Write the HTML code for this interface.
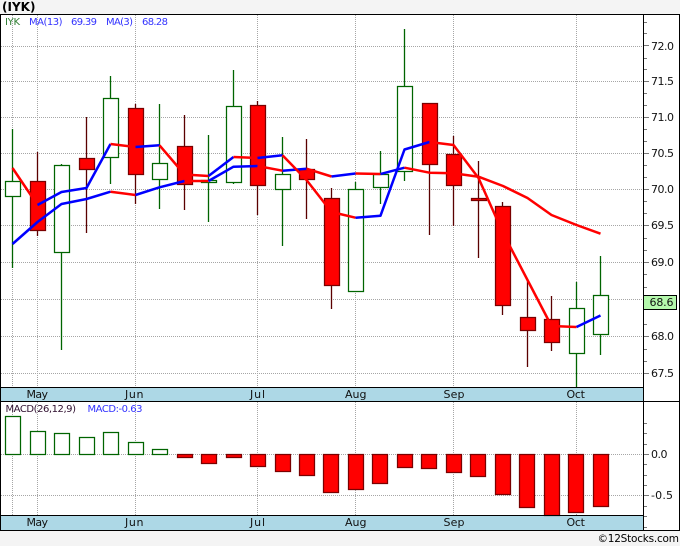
<!DOCTYPE html>
<html><head><meta charset="utf-8"><style>
html,body{margin:0;padding:0;background:#f4f4f4;width:680px;height:546px;overflow:hidden}
svg{display:block}
text{font-family:"DejaVu Sans","Liberation Sans",sans-serif;font-size:11px;fill:#111}
.l{font-size:10px;fill:#3333ff}
</style></head><body>
<svg width="680" height="546" viewBox="0 0 680 546" xmlns="http://www.w3.org/2000/svg">
<rect x="0" y="0" width="680" height="546" fill="#f4f4f4"/>
<rect x="0" y="14" width="680" height="516" fill="#fff"/>
<rect x="1" y="388" width="642" height="13" fill="#add8e6"/>
<rect x="1" y="516" width="642" height="14" fill="#add8e6"/>
<g shape-rendering="crispEdges" stroke="#a6a6a6" stroke-dasharray="1 1" fill="none">
<path d="M1 46.5H644M1 81.5H644M1 117.5H644M1 153.5H644M1 189.5H644M1 225.5H644M1 262.5H644M1 299.5H644M1 336.5H644M1 373.5H644M1 454.5H644M1 495.5H644"/>
<path d="M12.5 15V387M37.5 15V387M135.5 15V387M257.5 15V387M355.5 15V387M453.5 15V387M576.5 15V387M12.5 402V515M37.5 402V515M135.5 402V515M257.5 402V515M355.5 402V515M453.5 402V515M576.5 402V515"/>
</g>
<g fill="none" stroke="#006400" stroke-width="1.3">
<path d="M12.5 129V268M61.5 164V350M110.5 76V184M159.5 104V209M208.5 135V222M233.5 70V184M282.5 137V246M355.5 182V292M380.5 151V204M404.5 29V181M576.5 282V387M600.5 256V355"/>
</g>
<g fill="none" stroke="#5a0000" stroke-width="1.3">
<path d="M37.5 152V236M86.5 117V233M135.5 104V204M184.5 115V210M257.5 101V215M306.5 139V219M331.5 188V309M429.5 103V235M453.5 136V226M478.5 161V258M502.5 202V315M527.5 280V367M551.5 296V351"/>
</g>
<g fill="#fff" stroke="#006400" stroke-width="1.25">
<rect x="5.5" y="181.5" width="15" height="15"/>
<rect x="54.5" y="165.5" width="15" height="87"/>
<rect x="103.5" y="98.5" width="15" height="59"/>
<rect x="152.5" y="163.5" width="15" height="16"/>
<rect x="201.5" y="180.5" width="15" height="2"/>
<rect x="226.5" y="106.5" width="15" height="76"/>
<rect x="275.5" y="174.5" width="15" height="15"/>
<rect x="348.5" y="189.5" width="15" height="102"/>
<rect x="373.5" y="174.5" width="15" height="13"/>
<rect x="397.5" y="86.5" width="15" height="85"/>
<rect x="569.5" y="308.5" width="15" height="45"/>
<rect x="593.5" y="295.5" width="15" height="39"/>
</g>
<g fill="#f00" stroke="#7a0000" stroke-width="1.25">
<rect x="30.5" y="181.5" width="15" height="49"/>
<rect x="79.5" y="158.5" width="15" height="11"/>
<rect x="128.5" y="108.5" width="15" height="66"/>
<rect x="177.5" y="146.5" width="15" height="38"/>
<rect x="250.5" y="105.5" width="15" height="80"/>
<rect x="299.5" y="169.5" width="15" height="10"/>
<rect x="324.5" y="198.5" width="15" height="87"/>
<rect x="422.5" y="103.5" width="15" height="61"/>
<rect x="446.5" y="154.5" width="15" height="31"/>
<rect x="471.5" y="198.5" width="15" height="2"/>
<rect x="495.5" y="206.5" width="15" height="99"/>
<rect x="520.5" y="317.5" width="15" height="13"/>
<rect x="544.5" y="319.5" width="15" height="23"/>
</g>
<g fill="none" stroke-width="2.5" stroke-linejoin="round">
<path stroke="#00f" d="M12.5 244L37.5 222L61.5 204L86.5 199L110.5 191.7"/>
<path stroke="#f00" d="M110.5 191.7L135.5 195"/>
<path stroke="#00f" d="M135.5 195L159.5 187.3L184.5 181"/>
<path stroke="#f00" d="M184.5 181L208.5 181"/>
<path stroke="#00f" d="M208.5 181L233.5 166.7L257.5 166"/>
<path stroke="#f00" d="M257.5 166L282.5 170.7"/>
<path stroke="#00f" d="M282.5 170.7L306.5 168.7"/>
<path stroke="#f00" d="M306.5 168.7L331.5 176.5"/>
<path stroke="#00f" d="M331.5 176.5L355.5 173.5"/>
<path stroke="#f00" d="M355.5 173.5L380.5 174"/>
<path stroke="#00f" d="M380.5 174L404.5 167.7"/>
<path stroke="#f00" d="M404.5 167.7L429.5 172.7L453.5 173.3L478.5 176.7L503 186L527.5 198L551.5 215L576.5 225L600.5 233.7"/>
<path stroke="#f00" d="M12.5 168L37.5 205"/>
<path stroke="#00f" d="M37.5 205L61.5 192L86.5 188L110.5 144"/>
<path stroke="#f00" d="M110.5 144L135.5 147"/>
<path stroke="#00f" d="M135.5 147L159.5 145.3"/>
<path stroke="#f00" d="M159.5 145.3L184.5 174.5L208.5 176"/>
<path stroke="#00f" d="M208.5 176L233.5 157"/>
<path stroke="#f00" d="M233.5 157L257.5 158"/>
<path stroke="#00f" d="M257.5 158L282.5 155.3"/>
<path stroke="#f00" d="M282.5 155.3L306.5 180L331.5 212L355.5 217.7"/>
<path stroke="#00f" d="M355.5 217.7L380.5 215.7L404.5 149.5L429.5 142"/>
<path stroke="#f00" d="M429.5 142L453.5 145L478.5 178L503 233L527.5 280L551.5 326L576.5 327"/>
<path stroke="#00f" d="M576.5 327L600.5 315.5"/>
</g>
<g fill="#fff" stroke="#006400" stroke-width="1.25">
<rect x="5.5" y="416.5" width="15" height="38"/>
<rect x="30.5" y="431.5" width="15" height="23"/>
<rect x="54.5" y="433.5" width="15" height="21"/>
<rect x="79.5" y="437.5" width="15" height="17"/>
<rect x="103.5" y="432.5" width="15" height="22"/>
<rect x="128.5" y="442.5" width="15" height="12"/>
<rect x="152.5" y="449.5" width="15" height="5"/>
</g>
<g fill="#f00" stroke="#7a0000" stroke-width="1.25">
<rect x="177.5" y="454.5" width="15" height="3"/>
<rect x="201.5" y="454.5" width="15" height="9"/>
<rect x="226.5" y="454.5" width="15" height="3"/>
<rect x="250.5" y="454.5" width="15" height="12"/>
<rect x="275.5" y="454.5" width="15" height="17"/>
<rect x="299.5" y="454.5" width="15" height="21"/>
<rect x="323.5" y="454.5" width="15" height="38"/>
<rect x="348.5" y="454.5" width="15" height="35"/>
<rect x="372.5" y="454.5" width="15" height="29"/>
<rect x="397.5" y="454.5" width="15" height="13"/>
<rect x="421.5" y="454.5" width="15" height="14"/>
<rect x="446.5" y="454.5" width="15" height="18"/>
<rect x="470.5" y="454.5" width="15" height="22"/>
<rect x="495.5" y="454.5" width="15" height="40"/>
<rect x="519.5" y="454.5" width="15" height="53"/>
<rect x="544.5" y="454.5" width="15" height="61"/>
<rect x="568.5" y="454.5" width="15" height="58"/>
<rect x="593.5" y="454.5" width="15" height="52"/>
</g>
<g shape-rendering="crispEdges" fill="none" stroke="#000">
<path d="M0 14.5H680M0 530.5H680M0 401.5H680M0 387.5H644M0 515.5H644"/>
<path d="M0.5 14V531M679.5 14V531M643.5 14V531"/>
</g>
<g shape-rendering="crispEdges" fill="none" stroke="#777">
<path d="M644 22.5h3M644 33.5h3M644 45.5h5M644 58.5h3M644 69.5h3M644 81.5h5M644 93.5h3M644 105.5h3M644 117.5h5M644 129.5h3M644 141.5h3M644 153.5h5M644 165.5h3M644 177.5h3M644 189.5h5M644 201.5h3M644 213.5h3M644 225.5h5M644 238.5h3M644 250.5h3M644 262.5h5M644 274.5h3M644 287.5h3M644 324.5h3M644 336.5h5M644 349.5h3M644 361.5h3M644 373.5h5M644 423.5h3M644 433.5h3M644 444.5h3M644 454.5h5M644 464.5h3M644 475.5h3M644 485.5h3M644 495.5h5M644 506.5h3M644 516.5h3M644 527.5h3"/>
</g>
<rect x="643.5" y="295.5" width="33" height="14" fill="#b4f8ac" stroke="#000" shape-rendering="crispEdges"/>
<text x="2" y="11" style="font-weight:bold;font-size:12px;fill:#000">(IYK)</text>
<text x="5" y="25" class="l" style="fill:#2e7d32" textLength="15">IYK</text>
<text x="29" y="25" class="l" textLength="33.5">MA(13)</text>
<text x="71" y="25" class="l" textLength="26">69.39</text>
<text x="106" y="25" class="l" textLength="27">MA(3)</text>
<text x="142" y="25" class="l" textLength="26">68.28</text>
<text x="651" y="50" textLength="23">72.0</text>
<text x="651" y="85" textLength="23">71.5</text>
<text x="651" y="121" textLength="23">71.0</text>
<text x="651" y="157" textLength="23">70.5</text>
<text x="651" y="193" textLength="23">70.0</text>
<text x="651" y="229" textLength="23">69.5</text>
<text x="651" y="266" textLength="23">69.0</text>
<text x="649.5" y="306" textLength="24">68.6</text>
<text x="651" y="340" textLength="23">68.0</text>
<text x="651" y="377" textLength="23">67.5</text>
<text x="651" y="458" textLength="16.5">0.0</text>
<text x="651" y="499" textLength="22">-0.5</text>
<text x="26.5" y="398" textLength="21.5">May</text><text x="125" y="398" textLength="18.5">Jun</text><text x="250" y="398" textLength="15">Jul</text><text x="345" y="398" textLength="21.5">Aug</text><text x="443.5" y="398" textLength="21">Sep</text><text x="566.5" y="398" textLength="18.5">Oct</text>
<text x="26.5" y="526" textLength="21.5">May</text><text x="125" y="526" textLength="18.5">Jun</text><text x="250" y="526" textLength="15">Jul</text><text x="345" y="526" textLength="21.5">Aug</text><text x="443.5" y="526" textLength="21">Sep</text><text x="566.5" y="526" textLength="18.5">Oct</text>
<text x="5.5" y="412" class="l" style="fill:#301030" textLength="70.5">MACD(26,12,9)</text>
<text x="87.5" y="412" class="l" textLength="55">MACD:-0.63</text>
<text x="597.5" y="542" style="fill:#000;font-size:10.5px" textLength="81.5">©12Stocks.com</text>
</svg>
</body></html>
